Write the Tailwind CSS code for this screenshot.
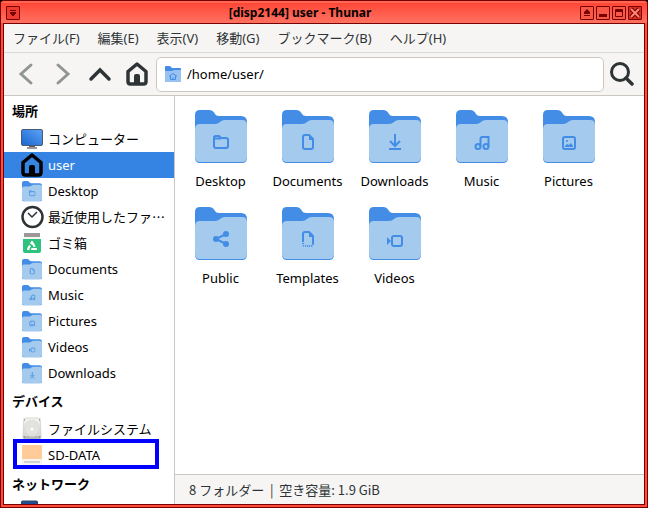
<!DOCTYPE html>
<html lang="ja">
<head>
<meta charset="utf-8">
<title>user - Thunar</title>
<script src="https://cdn.jsdelivr.net/npm/@tailwindcss/browser@4"></script>
</head>
<body class="bg-black">
<svg class="absolute size-0" aria-hidden="true">
  <defs>
    <linearGradient id="screen" x1="0" y1="1" x2="1" y2="0"><stop offset="0" stop-color="#1a66d0"/><stop offset="1" stop-color="#5da2f5"/></linearGradient>
    <linearGradient id="metal" x1="0" y1="0" x2="0" y2="1"><stop offset="0" stop-color="#f4f4f2"/><stop offset="1" stop-color="#d3d4cf"/></linearGradient>
  </defs>
  <symbol id="folder" viewBox="0 0 52 53">
    <path fill="#438de6" d="M0 5Q0 0 5 0H14Q18 0 20 4Q21 6 24 6H46Q52 6 52 12V48Q52 53 47 53H5Q0 53 0 48Z"/>
    <path fill="#a4caee" d="M0 19Q0 14 5 14H20Q23 14 25 12Q27 10 30 10H47Q52 10 52 15V47Q52 52 47 52H5Q0 52 0 47Z"/>
  </symbol>
  <symbol id="g-desktop" viewBox="0 0 16 16"><path fill="none" stroke="#438de6" stroke-width="2" d="M1 5V3.5Q1 2 2.5 2H6L8 4H13Q15 4 15 6V12Q15 14 13 14H3Q1 14 1 12V4.500H8"/></symbol>
  <symbol id="g-documents" viewBox="0 0 16 16"><path fill="none" stroke="#438de6" stroke-width="2" d="M5 1H9L13 5V13Q13 15 11 15H5Q3 15 3 13V3Q3 1 5 1Z"/><path fill="#438de6" d="M9 1L13 6H9Z"/></symbol>
  <symbol id="g-templates" viewBox="0 0 16 16"><path fill="none" stroke="#438de6" stroke-width="2" d="M3 10V3Q3 1 5 1H9L13 5V13"/><path fill="#438de6" d="M9 1L13 6H9Z"/><path fill="none" stroke="#438de6" stroke-width="2" stroke-dasharray="1 1" d="M3 10V13Q3 15 5 15H11Q13 15 13 13"/></symbol>
  <symbol id="g-downloads" viewBox="0 0 16 16"><path fill="none" stroke="#438de6" stroke-width="2" d="M8 0V11M3 7L8 12L13 7M2 15H14"/></symbol>
  <symbol id="g-music" viewBox="0 0 16 16"><g fill="none" stroke="#438de6" stroke-width="2"><circle cx="4" cy="12.5" r="2.5"/><circle cx="12" cy="12.5" r="2.5"/><path d="M6.5 12.5V5Q6.5 3 8.500 3H14.500V12.500"/></g></symbol>
  <symbol id="g-pictures" viewBox="0 0 16 16"><rect x="2" y="3" width="12" height="12" rx="2" fill="none" stroke="#438de6" stroke-width="2"/><circle cx="6" cy="7" r="1" fill="#438de6"/><path fill="#438de6" d="M4 13V12L6 10L8 11L10 9L12 12V13Z"/></symbol>
  <symbol id="g-public" viewBox="0 0 16 16"><g fill="#438de6"><circle cx="3" cy="8" r="3"/><circle cx="13" cy="3" r="3"/><circle cx="13" cy="13" r="3"/></g><path fill="none" stroke="#438de6" stroke-width="2" d="M13 3L3 8L13 13"/></symbol>
  <symbol id="g-videos" viewBox="0 0 16 16"><rect x="5" y="5" width="10" height="10" rx="2" fill="none" stroke="#438de6" stroke-width="2"/><path fill="#438de6" d="M0 6L4 10L0 14Z"/></symbol>
  <symbol id="home" viewBox="0 0 24 24"><path fill="none" stroke="currentColor" stroke-width="3.500" stroke-linejoin="round" d="M3 9.500L12 2L21 9.500V19.500Q21 22 18.500 22H5.500Q3 22 3 19.500Z"/><path fill="currentColor" d="M9 22V14Q9 12 11 12H13Q15 12 15 14V22Z"/></symbol>
</svg>

<div class="flex h-screen flex-col overflow-hidden rounded-t-[4px] border border-[#780000] bg-[#ff4c3c] font-['Noto_Sans','Noto_Sans_CJK_JP',sans-serif] text-[13px] leading-5 text-black">
  <header class="flex h-[22px] shrink-0 items-center gap-[2px] border-t-2 border-[#ff6654] bg-linear-to-b from-[#ff4636] to-[#ff7060] px-[5px] text-[#780000]">
    <button aria-label="ウィンドウメニュー" class="size-[14px] rounded-[1px] border border-[#780000] bg-[#f03c30]"><svg viewBox="0 0 12 12" class="size-3" fill="currentColor"><path d="M3 3H9V4H3ZM3 5H9V7H8V8H7V9H5V8H4V7H3Z"/></svg></button>
    <h1 class="flex-1 text-center text-xs font-bold text-black">[disp2144] user - Thunar</h1>
    <button aria-label="巻き上げ" class="size-[14px] rounded-[1px] border border-[#780000] bg-[#f85848]"><svg viewBox="0 0 12 12" class="size-3" fill="currentColor"><path d="M6 2L9 5V7H3V5ZM3 8H9V9H3Z"/></svg></button>
    <button aria-label="最小化" class="size-[14px] rounded-[1px] border border-[#780000] bg-[#f85848]"><svg viewBox="0 0 12 12" class="size-3" fill="currentColor"><path d="M2 7H10V10H2Z"/></svg></button>
    <button aria-label="最大化" class="size-[14px] rounded-[1px] border border-[#780000] bg-[#f85848]"><svg viewBox="0 0 12 12" class="size-3" fill="none" stroke="currentColor"><path d="M2.500 2.500H9.500V9.500H2.500ZM2 3.500H10M2 4.500H10"/></svg></button>
    <button aria-label="閉じる" class="size-[14px] rounded-[1px] border border-[#780000] bg-[#d82c24]"><svg viewBox="0 0 12 12" class="size-3" fill="none"><path stroke="#780000" stroke-width="4" d="M2 2L10 10M10 2L2 10"/><path stroke="#ff8878" stroke-width="2" d="M2 2L10 10M10 2L2 10"/></svg></button>
  </header>

  <div class="mx-[2px] mb-[2px] flex min-h-0 flex-1 flex-col border border-[#780000] bg-[#f6f5f4]">
    <nav aria-label="メニュー" class="flex h-[29px] shrink-0 items-center gap-[18px] border-b border-[#dcdad7] px-[9px] text-[#2e3436]">
      <button>ファイル(F)</button><button>編集(E)</button><button>表示(V)</button><button>移動(G)</button><button>ブックマーク(B)</button><button>ヘルプ(H)</button>
    </nav>
    <div class="flex h-[43px] shrink-0 items-center border-b border-[#cdc7c2] pr-1 pl-[3px] text-[#2e3436]">
      <button aria-label="戻る" class="flex w-[37px] justify-center text-[#929595]"><svg viewBox="0 0 24 24" class="size-6" fill="none" stroke="currentColor" stroke-width="3" stroke-linecap="round"><path d="M17 3L7 12L17 21"/></svg></button>
      <button aria-label="進む" class="flex w-[37px] justify-center text-[#929595]"><svg viewBox="0 0 24 24" class="size-6" fill="none" stroke="currentColor" stroke-width="3" stroke-linecap="round"><path d="M7 3L17 12L7 21"/></svg></button>
      <button aria-label="上へ" class="flex w-[37px] justify-center"><svg viewBox="0 0 24 24" class="size-6" fill="none" stroke="currentColor" stroke-width="3.500" stroke-linecap="round"><path d="M3 17L12 8L21 17"/></svg></button>
      <button aria-label="ホーム" class="mr-px flex w-[37px] justify-center"><svg class="size-6"><use href="#home"/></svg></button>
      <label class="flex h-[35px] flex-1 items-center gap-[6px] rounded-[5px] border border-[#cdc7c2] bg-white px-2">
        <svg class="h-4 w-4" viewBox="0 0 16 16"><path fill="#438de6" d="M0 1Q0 0 1 0H5L7 2H15Q16 2 16 3V15Q16 16 15 16H1Q0 16 0 15Z"/><path fill="#99c1f1" d="M0 5H7L9 4H16V15Q16 16 15 16H1Q0 16 0 15Z"/><path fill="none" stroke="#438de6" d="M4 10.500L8 7.500L12 10.500M5.500 10V13.500H10.500V10M8 11V13"/></svg>
        <input aria-label="場所" class="min-w-0 flex-1 bg-transparent text-black outline-none" value="/home/user/">
      </label>
      <button aria-label="検索" class="flex w-9 justify-center"><svg viewBox="0 0 24 24" class="size-6" fill="none" stroke="currentColor" stroke-width="3" stroke-linecap="round"><circle cx="10" cy="10" r="8.500"/><path stroke-width="3.500" d="M16 16L22 22"/></svg></button>
    </div>

    <div class="flex min-h-0 flex-1">
      <aside class="w-[171px] shrink-0 overflow-hidden border-r border-[#cdc7c2] bg-white">
        <h2 class="flex h-[30px] items-center px-2 font-bold">場所</h2>
        <ul id="places"></ul>
        <h2 class="flex h-[30px] items-center px-2 font-bold">デバイス</h2>
        <ul>
          <li><a href="#" class="flex h-[26px] items-center gap-1 pl-4"><svg viewBox="0 0 24 24" class="size-6"><path fill="url(#metal)" stroke="#c4c4c0" stroke-width=".6" d="M5 1H19Q20 1 20.300 3L21 18V20Q21 22 19 22H5Q3 22 3 20V18L3.700 3Q4 1 5 1Z"/><path fill="#bcbcb7" d="M3 19H21V20Q21 22 19 22H5Q3 22 3 20Z"/><ellipse cx="12" cy="11.500" rx="7.500" ry="8" fill="#e2e2de" stroke="#d0d1cc" stroke-width=".6"/><circle cx="12" cy="12" r="1.500" fill="#fff"/><path stroke="#777" d="M4 3H5M19 3H20M4 20H5M19 20H20"/></svg>ファイルシステム</a></li>
          <li class="relative"><a href="#" class="flex h-[26px] items-center gap-1 pl-4"><svg viewBox="0 0 24 24" class="size-6"><rect x="2" y="2" width="20" height="20" rx="1" fill="#f6f5f4"/><path fill="#ffcc99" d="M3 2H21Q22 2 22 3V16H2V3Q2 2 3 2Z"/><path fill="#d5d3cf" d="M4 18H20V20H4Z"/></svg>SD-DATA</a>
            <span class="pointer-events-none absolute -top-[3px] left-[9px] h-[30px] w-[146px] border-4 border-[#0000ff]"></span></li>
        </ul>
        <h2 class="flex h-[31px] items-center px-2 font-bold">ネットワーク</h2>
        <a href="#" aria-label="ネットワークを参照" class="flex h-[26px] items-center pl-4"><svg viewBox="0 0 24 24" class="size-6"><rect x="1.500" y="1" width="16" height="14" rx="1" fill="#1c4f96" stroke="#36475f"/></svg></a>
      </aside>
      <div class="flex min-w-0 flex-1 flex-col">
        <main id="files" class="grid flex-1 auto-rows-[97px] grid-cols-[repeat(auto-fill,87px)] bg-white pt-[14px] pl-[2px]"></main>
        <footer class="flex h-[30px] shrink-0 items-center border-t border-[#cdc7c2] px-[14px] font-['Noto_Sans_CJK_JP',sans-serif] text-[#2e3436]">8 フォルダー&nbsp; |&nbsp; 空き容量: 1.9 GiB</footer>
      </div>
    </div>
  </div>
</div>
<script>
const computer = '<svg viewBox="0 0 24 24" class="size-6 shrink-0"><rect x="9" y="18" width="6" height="3" fill="#5e5c64"/><path fill="#9a9996" d="M7 20H17V22H7Z"/><rect x="1.500" y="2.500" width="21" height="16" rx="1.500" fill="url(#screen)" stroke="#4a5a70"/></svg>';
const home = '<svg class="size-6 shrink-0 text-black"><use href="#home"/></svg>';
const clock = '<svg viewBox="0 0 24 24" class="size-6 shrink-0"><circle cx="12.500" cy="12" r="10" fill="#fff" stroke="#2e3436" stroke-width="2.500"/><path fill="none" stroke="#2e3436" stroke-width="1.500" d="M8 8L12 12L17 7"/></svg>';
const trash = '<svg viewBox="0 0 24 24" class="size-6 shrink-0"><path fill="#f6f5f4" d="M4 4H20V10H4Z"/><path fill="#9a9996" d="M4 2H20V6H4Z"/><path fill="#2ec27e" d="M3 8H21V20Q21 22 19 22H5Q3 22 3 20Z"/><path fill="none" stroke="#fff" stroke-width="2.200" stroke-dasharray="5.500 1.800" d="M12 11L16 18H8Z" stroke-linejoin="round"/></svg>';
const folder = g => '<svg viewBox="0 0 24 24" class="size-6 shrink-0"><use href="#folder" x="2" y="2" width="20" height="20.400"/><use href="#g-' + g + '" x="9" y="11" width="6.500" height="6.500"/></svg>';
const places = [['コンピューター', computer], ['user', home], ['Desktop', folder('desktop')], ['最近使用したファ…', clock], ['ゴミ箱', trash], ['Documents', folder('documents')], ['Music', folder('music')], ['Pictures', folder('pictures')], ['Videos', folder('videos')], ['Downloads', folder('downloads')]];
document.getElementById('places').innerHTML = places.map(([name, icon]) =>
  '<li><a href="#" class="flex h-[26px] items-center gap-1 pl-4 ' + (name === 'user' ? 'bg-[#3584e4] text-white' : '') + '">' + icon + '<span class="whitespace-nowrap ' + (name.endsWith('…') ? "font-['Noto_Sans_CJK_JP',sans-serif]" : '') + '">' + name + '</span></a></li>').join('');
document.getElementById('files').innerHTML = ['Desktop', 'Documents', 'Downloads', 'Music', 'Pictures', 'Public', 'Templates', 'Videos'].map(name =>
  '<a href="#" class="flex flex-col items-center gap-2"><svg viewBox="0 0 52 53" class="h-[53px] w-[52px]"><use href="#folder" width="52" height="53"/><use href="#g-' + name.toLowerCase() + '" x="18" y="24" width="16" height="16"/></svg>' + name + '</a>').join('');
</script>
</body>
</html>
